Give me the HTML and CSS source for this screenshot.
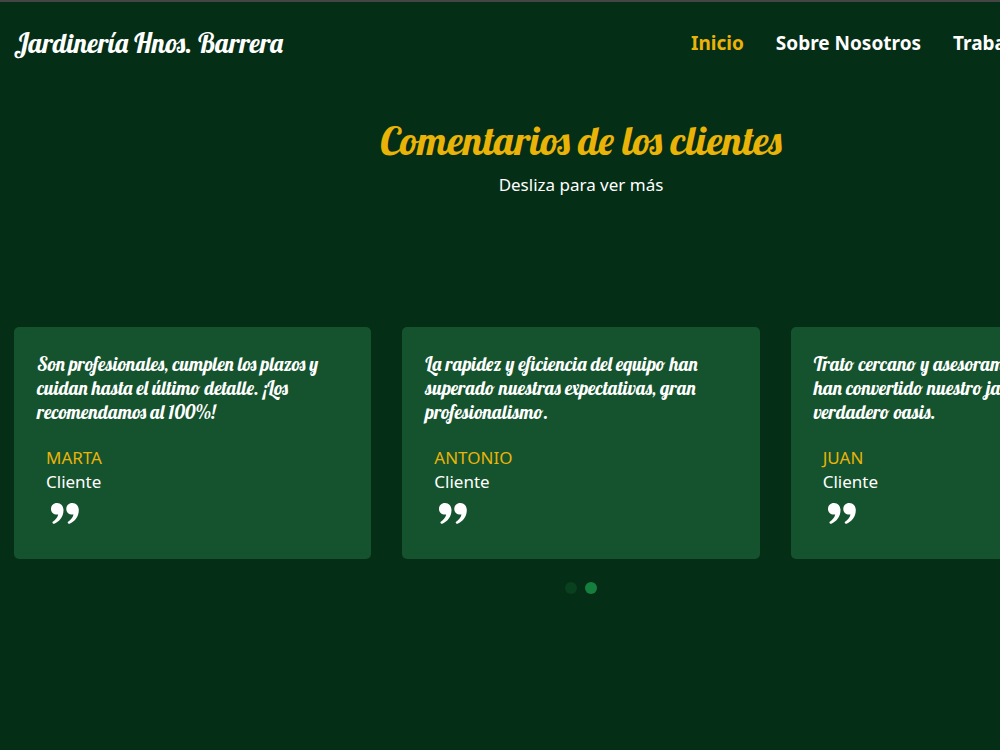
FILE: index.html
```html
<!DOCTYPE html>
<html lang="es">
<head>
<meta charset="utf-8">
<meta name="viewport" content="width=device-width, initial-scale=1">
<title>Jardinería Hnos. Barrera</title>
<link rel="stylesheet" href="styles.css">
</head>
<body>
<div class="page">
  <header class="header">
    <a class="brand" href="#">Jardinería Hnos. Barrera</a>
    <nav class="nav">
      <a class="nav-link nav-link-active" href="#">Inicio</a>
      <a class="nav-link" href="#">Sobre Nosotros</a>
      <a class="nav-link" href="#">Trabajos</a>
    </nav>
  </header>
  <main class="main">
    <h1 class="title">Comentarios de los clientes</h1>
    <p class="subtitle">Desliza para ver más</p>
    <div class="cards">
      <article class="card">
        <p class="quote">Son profesionales, cumplen los plazos y<br>cuidan hasta el último detalle. ¡Los<br>recomendamos al 100%!</p>
        <div class="author">
          <p class="name">MARTA</p>
          <p class="role">Cliente</p>
          <svg class="mark" viewBox="0 0 28 21" aria-hidden="true"><path d="M6 0C2.500 0 0 2.500 0 6s2.500 5.600 6 5.600l1.200-.1C6.500 14.500 4.500 17 1.800 18.800c-1 .8.200 2.500 1.500 1.900C8.500 18.500 12.500 13.500 12.500 7.200 12.500 3 10 0 6 0zM21.300 0c-3.500 0-6 2.500-6 6s2.500 5.600 6 5.600l1.200-.1c-.7 3-2.700 5.500-5.400 7.300-1 .8.200 2.500 1.500 1.900 5.200-2.200 9.200-7.200 9.200-13.500C27.800 3 25.300 0 21.300 0z"/></svg>
        </div>
      </article>
      <article class="card">
        <p class="quote">La rapidez y eficiencia del equipo han<br>superado nuestras expectativas, gran<br>profesionalismo.</p>
        <div class="author">
          <p class="name">ANTONIO</p>
          <p class="role">Cliente</p>
          <svg class="mark" viewBox="0 0 28 21" aria-hidden="true"><path d="M6 0C2.500 0 0 2.500 0 6s2.500 5.600 6 5.600l1.200-.1C6.500 14.500 4.500 17 1.800 18.800c-1 .8.200 2.500 1.500 1.900C8.500 18.500 12.500 13.500 12.500 7.200 12.500 3 10 0 6 0zM21.300 0c-3.500 0-6 2.500-6 6s2.500 5.600 6 5.600l1.200-.1c-.7 3-2.700 5.500-5.400 7.300-1 .8.200 2.500 1.500 1.900 5.200-2.200 9.200-7.200 9.200-13.500C27.800 3 25.300 0 21.300 0z"/></svg>
        </div>
      </article>
      <article class="card">
        <p class="quote">Trato cercano y asesoramiento,<br>han convertido nuestro jardín en un<br>verdadero oasis.</p>
        <div class="author">
          <p class="name">JUAN</p>
          <p class="role">Cliente</p>
          <svg class="mark" viewBox="0 0 28 21" aria-hidden="true"><path d="M6 0C2.500 0 0 2.500 0 6s2.500 5.600 6 5.600l1.200-.1C6.500 14.500 4.500 17 1.800 18.800c-1 .8.200 2.500 1.500 1.900C8.500 18.500 12.500 13.500 12.500 7.200 12.500 3 10 0 6 0zM21.300 0c-3.500 0-6 2.500-6 6s2.500 5.600 6 5.600l1.200-.1c-.7 3-2.700 5.500-5.400 7.300-1 .8.200 2.500 1.500 1.900 5.200-2.200 9.200-7.200 9.200-13.500C27.800 3 25.300 0 21.300 0z"/></svg>
        </div>
      </article>
    </div>
    <div class="dots">
      <button class="dot" type="button" aria-label="Página 1"></button>
      <button class="dot dot-active" type="button" aria-label="Página 2"></button>
    </div>
  </main>
</div>
</body>
</html>
```
FILE: styles.css
```css
* { box-sizing: border-box; }
body {
  margin: 0;
  overflow-x: hidden;
  background: #052e16;
  color: #fff;
  font-family: "Segoe UI", "Noto Sans", sans-serif;
  font-size: 17px;
  line-height: 24px;
}
p, h1 { margin: 0; }
a { color: inherit; text-decoration: none; }
.page {
  min-width: 1162px;
  min-height: 100vh;
  padding: 0 14px;
  border-top: 2px solid #454545;
}
.header {
  display: grid;
  grid-template-columns: 677px 1fr;
  align-items: center;
  height: 82px;
}
.brand, .title, .quote {
  font-family: Lobster, "Liberation Serif", serif;
  font-weight: 400;
}
.brand { font-size: 27px; }
.nav {
  display: flex;
  gap: 32px;
  white-space: nowrap;
  font-size: 19px;
  font-weight: 700;
}
.nav-link-active { color: #eab308; }
.main {
  display: flex;
  flex-direction: column;
  padding-top: 32px;
}
.title {
  color: #eab308;
  font-size: 40px;
  line-height: 48px;
  text-align: center;
}
.subtitle {
  margin-top: 9px;
  text-align: center;
}
.cards {
  display: grid;
  grid-template-columns: repeat(3, 1fr);
  gap: 31px;
  margin-top: 130px;
}
.card {
  padding: 25px 23px 35px;
  border-radius: 5px;
  background: #14532d;
}
.quote {
  font-size: 19px;
  white-space: nowrap;
}
.author { padding: 22px 9px 0; }
.name { color: #eab308; }
.mark {
  display: block;
  width: 28px;
  height: 21px;
  margin: 9px 5px 0;
  fill: #fff;
}
.dots {
  display: flex;
  justify-content: center;
  gap: 8px;
  margin-top: 23px;
}
.dot {
  width: 12px;
  height: 12px;
  padding: 0;
  border: 0;
  border-radius: 50%;
  background: #09401d;
}
.dot-active { background: #15803d; }
```
